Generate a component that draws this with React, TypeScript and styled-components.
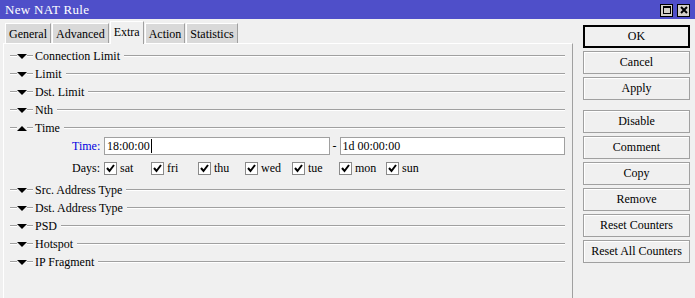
import styled, { createGlobalStyle } from 'styled-components';

const GlobalStyle = createGlobalStyle`
   html, body {
      margin: 0;
      padding: 0;
      background: #f0f0f0;
   }
   body {
      font-family: "Liberation Serif", "Times New Roman", serif;
      font-size: 12px;
      color: #000;
   }
`;

const collapsedTop = ['Connection Limit', 'Limit', 'Dst. Limit', 'Nth'];
const collapsedBottom = ['Src. Address Type', 'Dst. Address Type', 'PSD', 'Hotspot', 'IP Fragment'];
const days = ['sat', 'fri', 'thu', 'wed', 'tue', 'mon', 'sun'];
const tabs = ['General', 'Advanced', 'Extra', 'Action', 'Statistics'];

const buttonGroups = [
   ['OK', 'Cancel', 'Apply'],
   ['Disable', 'Comment', 'Copy', 'Remove', 'Reset Counters', 'Reset All Counters'],
];

const Arrow = ({ up }: { up?: boolean }) => (
   <svg width="10" height="5" viewBox="0 0 10 5">
      <polygon points={up ? '0,5 10,5 5,0' : '0,0 10,0 5,5'} fill="#000" />
   </svg>
);

const Section = ({ label, open }: { label: string; open?: boolean }) => (
   <Header>
      <Rule $w={7} />
      <Arrow up={open} />
      <Rule $w={6} />
      <HeaderLabel>{label}</HeaderLabel>
      <Rule />
   </Header>
);

const Check = () => (
   <CheckBox>
      <svg width="9" height="9" viewBox="0 0 9 9">
         <path d="M1 4 L3.5 7 L8 1" stroke="#000" strokeWidth="2" fill="none" />
      </svg>
   </CheckBox>
);

export default function App() {
   return (
      <>
         <GlobalStyle />
         <Window>
            <TitleBar>
               <Title>New NAT Rule</Title>
               <TitleButtons>
                  <TitleButton>
                     <svg width="8" height="8" viewBox="0 0 8 8">
                        <rect x="0.5" y="0.5" width="7" height="7" fill="none" stroke="#000" />
                        <line x1="0" y1="1.5" x2="8" y2="1.5" stroke="#000" />
                     </svg>
                  </TitleButton>
                  <TitleButton>
                     <svg width="8" height="8" viewBox="0 0 8 8">
                        <path d="M1 1 L7 7 M7 1 L1 7" stroke="#000" strokeWidth="2" />
                     </svg>
                  </TitleButton>
               </TitleButtons>
            </TitleBar>
            <Body>
               <Main>
                  <TabRow>
                     {tabs.map((t) => (
                        <Tab key={t} $active={t === 'Extra'}>
                           {t}
                        </Tab>
                     ))}
                  </TabRow>
                  <Panel>
                     {collapsedTop.map((s) => (
                        <Section key={s} label={s} />
                     ))}
                     <Section label="Time" open />
                     <TimeBody>
                        <FieldRow>
                           <FieldLabel $blue>Time:</FieldLabel>
                           <Field>
                              18:00:00
                              <Caret />
                           </Field>
                           <Sep>-</Sep>
                           <Field>1d 00:00:00</Field>
                        </FieldRow>
                        <FieldRow>
                           <FieldLabel>Days:</FieldLabel>
                           {days.map((d) => (
                              <Day key={d}>
                                 <Check />
                                 <span>{d}</span>
                              </Day>
                           ))}
                        </FieldRow>
                     </TimeBody>
                     {collapsedBottom.map((s) => (
                        <Section key={s} label={s} />
                     ))}
                  </Panel>
               </Main>
               <Side>
                  {buttonGroups.map((group, gi) => (
                     <ButtonGroup key={gi}>
                        {group.map((b) => (
                           <Button key={b} $default={b === 'OK'}>
                              {b}
                           </Button>
                        ))}
                     </ButtonGroup>
                  ))}
               </Side>
            </Body>
         </Window>
      </>
   );
}

const Window = styled.div`
   width: 695px;
   height: 298px;
   display: flex;
   flex-direction: column;
   overflow: hidden;
   background: #f0f0f0;
`;

const TitleBar = styled.div`
   height: 19px;
   background: #4f4fc9;
   display: flex;
   align-items: center;
   justify-content: space-between;
   padding: 0 5px 0 5px;
`;

const Title = styled.div`
   color: #fff;
   font-size: 13px;
   letter-spacing: 0.3px;
`;

const TitleButtons = styled.div`
   display: flex;
   gap: 4px;
   margin-top: 1px;
`;

const TitleButton = styled.div`
   width: 11px;
   height: 11px;
   border: 1px solid #000;
   background: #d4d0c8;
   display: flex;
   align-items: center;
   justify-content: center;
`;

const Body = styled.div`
   flex: 1;
   display: flex;
`;

const Main = styled.div`
   width: 573px;
   display: flex;
   flex-direction: column;
`;

const TabRow = styled.div`
   display: flex;
   align-items: flex-end;
   height: 24px;
   padding-left: 5px;
`;

const Tab = styled.div<{ $active?: boolean }>`
   height: ${({ $active }) => ($active ? 23 : 20)}px;
   line-height: 20px;
   padding: 0 3px;
   margin-right: 1px;
   box-sizing: border-box;
   background: ${({ $active }) => ($active ? '#f0f0f0' : '#d9d9d9')};
   border-top: 1px solid #fff;
   border-left: 1px solid #fff;
   border-right: 1px solid #a0a0a0;
   margin-bottom: ${({ $active }) => ($active ? -1 : 0)}px;
   position: relative;
   z-index: ${({ $active }) => ($active ? 1 : 0)};
`;

const Panel = styled.div`
   flex: 1;
   margin-left: 3px;
   border-top: 1px solid #fff;
   border-left: 1px solid #fff;
   border-right: 1px solid #a0a0a0;
   padding: 3px 7px 0 6px;
`;

const Header = styled.div`
   height: 18px;
   display: flex;
   align-items: center;
`;

const Rule = styled.div<{ $w?: number }>`
   ${({ $w }) => ($w ? `width: ${$w}px;` : 'flex: 1; margin-left: 4px;')}
   height: 0;
   border-top: 1px solid #a0a0a0;
   border-bottom: 1px solid #fff;
`;

const HeaderLabel = styled.span`
   margin-left: 2px;
   white-space: nowrap;
`;

const TimeBody = styled.div`
   padding-left: 62px;
   display: flex;
   flex-direction: column;
   gap: 4px;
   margin-bottom: 4px;
`;

const FieldRow = styled.div`
   height: 18px;
   display: flex;
   align-items: center;
`;

const FieldLabel = styled.span<{ $blue?: boolean }>`
   width: 32px;
   color: ${({ $blue }) => ($blue ? '#0000e0' : '#000')};
`;

const Field = styled.div`
   flex: 1;
   height: 18px;
   box-sizing: border-box;
   border: 1px solid #a0a0a0;
   background: #fff;
   padding: 0 2px;
   display: flex;
   align-items: center;
`;

const Caret = styled.span`
   display: inline-block;
   width: 1px;
   height: 14px;
   background: #000;
   margin-left: 1px;
`;

const Sep = styled.span`
   width: 10px;
   text-align: center;
`;

const Day = styled.div`
   width: 47px;
   display: flex;
   align-items: center;
   gap: 3px;
`;

const CheckBox = styled.div`
   width: 13px;
   height: 13px;
   box-sizing: border-box;
   border: 1px solid #8a8a8a;
   background: #fff;
   display: flex;
   align-items: center;
   justify-content: center;
`;

const Side = styled.div`
   padding: 6px 0 0 10px;
   display: flex;
   flex-direction: column;
   gap: 10px;
`;

const ButtonGroup = styled.div`
   display: flex;
   flex-direction: column;
   gap: 3px;
`;

const Button = styled.div<{ $default?: boolean }>`
   width: 107px;
   height: 23px;
   box-sizing: border-box;
   display: flex;
   align-items: center;
   justify-content: center;
   background: #f0f0f0;
   border: 1px solid ${({ $default }) => ($default ? '#000' : '#a0a0a0')};
   box-shadow: ${({ $default }) => ($default ? 'inset 0 0 0 1px #000' : 'inset 1px 1px 0 #fff')};
   white-space: nowrap;
`;
